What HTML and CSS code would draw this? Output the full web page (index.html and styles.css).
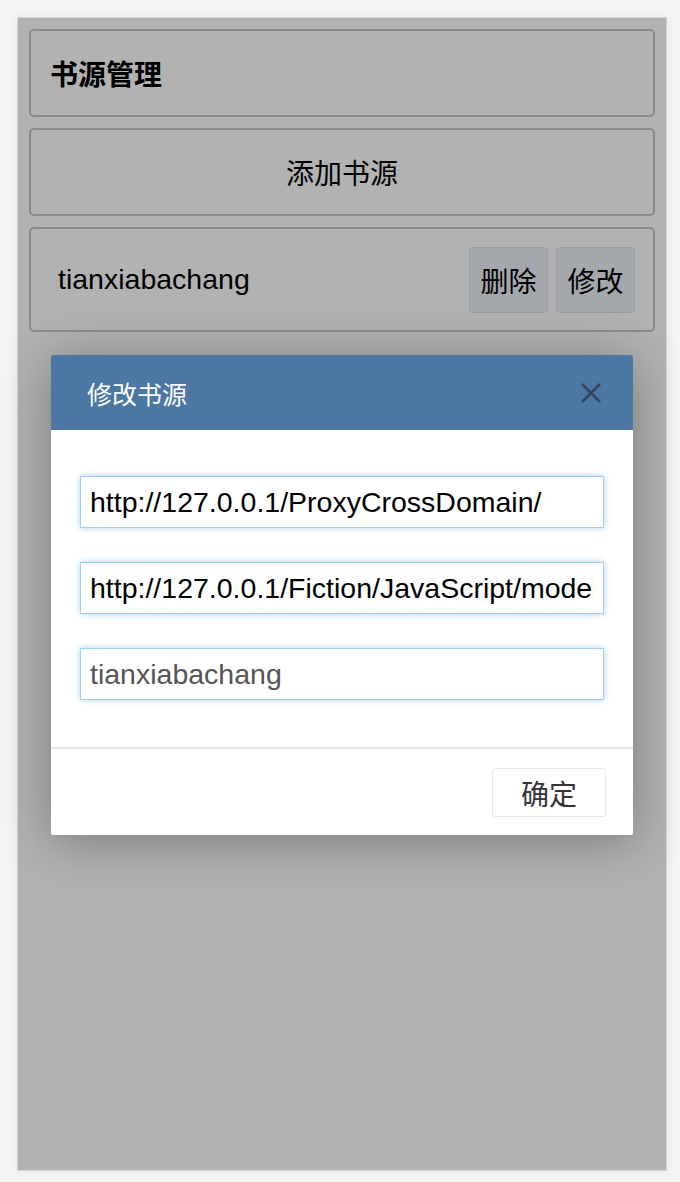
FILE: index.html
```html
<!DOCTYPE html>
<html lang="zh-CN">
<head>
<meta charset="utf-8">
<title>书源管理</title>
<link rel="stylesheet" href="styles.css">
</head>
<body>
<div class="frame">
  <div class="card card-title">书源管理</div>
  <div class="card card-add">添加书源</div>
  <div class="card card-item">
    <span class="item-name">tianxiabachang</span>
    <div class="item-actions">
      <button class="btn-small">删除</button>
      <button class="btn-small">修改</button>
    </div>
  </div>
  <div class="overlay"></div>
  <div class="modal">
    <div class="modal-header">
      <span class="modal-title">修改书源</span>
      <svg class="modal-close" width="22" height="22" viewBox="0 0 22 22">
        <path d="M2 2 L20 20 M20 2 L2 20" stroke="#36445a" stroke-width="2.7" fill="none"/>
      </svg>
    </div>
    <div class="modal-body">
      <input class="field" type="text" value="http://127.0.0.1/ProxyCrossDomain/">
      <input class="field" type="text" value="http://127.0.0.1/Fiction/JavaScript/model/tianxiabachang.js">
      <input class="field" type="text" placeholder="tianxiabachang">
    </div>
    <div class="modal-footer">
      <button class="btn-ok">确定</button>
    </div>
  </div>
</div>
</body>
</html>
```

FILE: styles.css
```css
html, body {
  margin: 0;
  padding: 0;
}
body {
  background: #f4f4f4;
  padding: 17px 13px 11px 17px;
  font-family: "Liberation Serif", "Noto Sans CJK SC", serif;
}
.frame {
  position: relative;
  box-sizing: border-box;
  width: 650px;
  height: 1154px;
  background: #ffffff;
  border: 1px solid #d2d2d2;
  padding: 11px;
  display: flex;
  flex-direction: column;
  gap: 11px;
  box-shadow: 0 0 12px rgba(0,0,0,0.06);
}
.card {
  box-sizing: border-box;
  border: 2px solid #c6c6c6;
  border-radius: 5px;
  display: flex;
  align-items: center;
  color: #000;
}
.card-title {
  height: 88px;
  padding-left: 19px;
  font-size: 28px;
  font-weight: bold;
  font-family: "Noto Sans CJK SC", serif;
}
.card-add {
  height: 88px;
  justify-content: center;
  font-size: 28px;
  font-family: "Noto Sans CJK SC", serif;
}
.card-item {
  height: 105px;
  padding: 0 18px 0 27px;
  justify-content: space-between;
}
.item-name {
  font-family: "Liberation Sans", Arial, sans-serif;
  font-size: 28.5px;
}
.item-actions {
  display: flex;
  gap: 8px;
}
.btn-small {
  box-sizing: border-box;
  width: 79px;
  height: 66px;
  padding: 0;
  background: #ebf0f6;
  border: 1.5px solid #dbe3eb;
  border-radius: 4px;
  font-family: "Noto Sans CJK SC", serif;
  font-size: 28px;
  color: #000;
}
.overlay {
  position: absolute;
  inset: 0;
  background: rgba(0,0,0,0.3);
}
.modal {
  position: absolute;
  left: 33px;
  top: 337px;
  width: 582px;
  background: #ffffff;
  border-radius: 2px;
  box-shadow: 0 6px 50px rgba(0,0,0,0.32);
  overflow: hidden;
}
.modal-header {
  height: 75px;
  background: #4b77a4;
  display: flex;
  align-items: center;
  justify-content: space-between;
  padding: 0 31px 0 36px;
}
.modal-title {
  color: #ffffff;
  font-size: 25px;
  font-family: "Noto Sans CJK SC", serif;
}
.modal-close {
  display: block;
}
.modal-body {
  padding: 46px 29px 47px;
  display: flex;
  flex-direction: column;
  gap: 34px;
}
.field {
  box-sizing: border-box;
  width: 100%;
  height: 52px;
  margin: 0;
  padding: 0 9px;
  border: 1.5px solid #9fcff7;
  border-radius: 0;
  box-shadow: 0 0 6px rgba(110,175,240,0.6);
  outline: none;
  font-family: "Liberation Sans", Arial, sans-serif;
  font-size: 28.5px;
  color: #000;
  background: #fff;
}
.field::placeholder {
  color: #555;
  opacity: 1;
}
.modal-footer {
  border-top: 2px solid #e6e6e6;
  padding: 19px 27px 18px 0;
  display: flex;
  justify-content: flex-end;
}
.btn-ok {
  box-sizing: border-box;
  width: 114px;
  height: 49px;
  padding: 0;
  background: #fff;
  border: 1.5px solid #e8e8e8;
  border-radius: 3px;
  font-family: "Noto Sans CJK SC", serif;
  font-size: 28px;
  color: #333;
}
```
